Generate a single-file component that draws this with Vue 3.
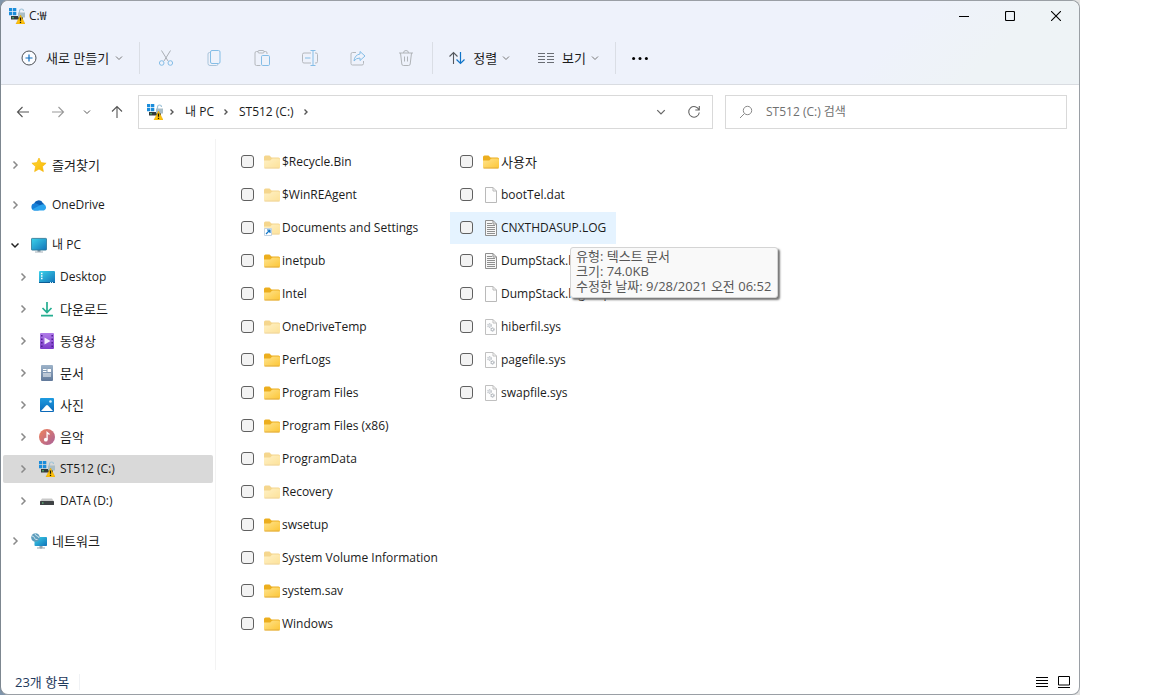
<script setup>
import { ref } from 'vue'

const editTools = [
  { icon: 'cut', label: '잘라내기' },
  { icon: 'copy', label: '복사' },
  { icon: 'paste', label: '붙여넣기' },
  { icon: 'rename', label: '이름 바꾸기' },
  { icon: 'share', label: '공유' },
  { icon: 'trash', label: '삭제' },
]

const groups = [
  [{ name: '즐겨찾기', icon: 'star', ko: true }],
  [{ name: 'OneDrive', icon: 'cloud' }],
  [
    { name: '내 PC', icon: 'monitor', open: true },
    { name: 'Desktop', icon: 'desktop', child: true },
    { name: '다운로드', icon: 'download', child: true, ko: true },
    { name: '동영상', icon: 'video', child: true, ko: true },
    { name: '문서', icon: 'document', child: true, ko: true },
    { name: '사진', icon: 'picture', child: true, ko: true },
    { name: '음악', icon: 'music', child: true, ko: true },
    { name: 'ST512 (C:)', icon: 'sysdrive', child: true, selected: true },
    { name: 'DATA (D:)', icon: 'drive', child: true },
  ],
  [{ name: '네트워크', icon: 'network', ko: true }],
]

const files = ref([
  { name: '$Recycle.Bin', icon: 'folder', dim: true },
  { name: '$WinREAgent', icon: 'folder', dim: true },
  { name: 'Documents and Settings', icon: 'folder', dim: true, link: true },
  { name: 'inetpub', icon: 'folder' },
  { name: 'Intel', icon: 'folder' },
  { name: 'OneDriveTemp', icon: 'folder', dim: true },
  { name: 'PerfLogs', icon: 'folder' },
  { name: 'Program Files', icon: 'folder' },
  { name: 'Program Files (x86)', icon: 'folder' },
  { name: 'ProgramData', icon: 'folder', dim: true },
  { name: 'Recovery', icon: 'folder', dim: true },
  { name: 'swsetup', icon: 'folder' },
  { name: 'System Volume Information', icon: 'folder', dim: true },
  { name: 'system.sav', icon: 'folder' },
  { name: 'Windows', icon: 'folder' },
  { name: '사용자', icon: 'folder', ko: true },
  { name: 'bootTel.dat', icon: 'file' },
  {
    name: 'CNXTHDASUP.LOG',
    icon: 'textfile',
    hover: true,
    tip: ['유형: 텍스트 문서', '크기: 74.0KB', '수정한 날짜: 9/28/2021 오전 06:52'],
  },
  { name: 'DumpStack.log', icon: 'textfile' },
  { name: 'DumpStack.log.tmp', icon: 'file' },
  { name: 'hiberfil.sys', icon: 'sysfile' },
  { name: 'pagefile.sys', icon: 'sysfile' },
  { name: 'swapfile.sys', icon: 'sysfile' },
])
</script>

<template>
  <svg class="defs" aria-hidden="true">
    <defs>
      <linearGradient id="g-folder" x1="0" y1="0" x2="1" y2="1">
        <stop offset="0" stop-color="#ffe48f" /><stop offset="1" stop-color="#fcc534" />
      </linearGradient>
      <linearGradient id="g-screen" x1="0" y1="0" x2="1" y2="1">
        <stop offset="0" stop-color="#3cd3ea" /><stop offset="1" stop-color="#1272b8" />
      </linearGradient>
      <linearGradient id="g-video" x1="0" y1="0" x2="0" y2="1">
        <stop offset="0" stop-color="#b07be8" /><stop offset="1" stop-color="#7b3bc9" />
      </linearGradient>
      <linearGradient id="g-doc" x1="0" y1="0" x2="0" y2="1">
        <stop offset="0" stop-color="#9db3c9" /><stop offset="1" stop-color="#61799a" />
      </linearGradient>
      <linearGradient id="g-pic" x1="0" y1="0" x2="0" y2="1">
        <stop offset="0" stop-color="#1d9be0" /><stop offset="1" stop-color="#0b68b8" />
      </linearGradient>
      <linearGradient id="g-music" x1="0" y1="0" x2="1" y2="1">
        <stop offset="0" stop-color="#f0835a" /><stop offset="1" stop-color="#a8619a" />
      </linearGradient>
      <linearGradient id="g-star" x1="0" y1="0" x2="1" y2="1">
        <stop offset="0" stop-color="#ffd83a" /><stop offset="1" stop-color="#f7b500" />
      </linearGradient>
    </defs>
    <symbol id="i-folder" viewBox="0 0 16 16">
      <path d="M0 3q0-1.500 1.500-1.500h4L7.500 3.500H14.500q1.500 0 1.500 1.500v3H0z" fill="#ecae1e" />
      <path d="M0 6.500h5.500q.8 0 1.300-.6l.9-.9q.5-.5 1.200-.5H14.500Q16 4.500 16 6v7q0 1.500-1.500 1.500h-13Q0 14.500 0 13z" fill="url(#g-folder)" />
      <path d="M.5 14h15" stroke="#d9a33c" stroke-width=".8" />
    </symbol>
    <symbol id="i-shortcut" viewBox="0 0 8 8">
      <path d="M.5.5h7v7h-7z" fill="#fff" stroke="#c3d3e2" />
      <path d="M2 6l3.500-3.500M3 2h3v3" fill="none" stroke="#1477c6" stroke-width="1.200" />
    </symbol>
    <symbol id="i-file" viewBox="0 0 16 16">
      <path d="M2.500.5h7.500L13.500 4v11.500h-11z" fill="#fdfdfd" stroke="#b9b9b9" />
      <path d="M10 .5V4h3.500" fill="none" stroke="#b9b9b9" />
    </symbol>
    <symbol id="i-textfile" viewBox="0 0 16 16">
      <path d="M2.500.5h7.500L13.500 4v11.500h-11z" fill="#f7f7f7" stroke="#8f8f8f" />
      <path d="M10 .5V4h3.500" fill="none" stroke="#8f8f8f" />
      <path d="M4 3.500h5M4 5.500h8M4 7.500h8M4 9.500h8M4 11.500h8M4 13.500h8" stroke="#8f8f8f" />
    </symbol>
    <symbol id="i-sysfile" viewBox="0 0 16 16">
      <path d="M2.500.5h7.500L13.500 4v11.500h-11z" fill="#fdfdfd" stroke="#c0c0c0" />
      <path d="M10 .5V4h3.500" fill="none" stroke="#c0c0c0" />
      <circle cx="6.500" cy="6.500" r="1.800" fill="#dfe2e6" stroke="#c6cacf" stroke-dasharray="1.200 .6" stroke-width="1.300" />
      <circle cx="9.500" cy="10.500" r="1.500" fill="#fff" stroke="#a2a8af" stroke-dasharray="1.100 .4" stroke-width="1.200" />
    </symbol>
    <symbol id="i-star" viewBox="0 0 16 16">
      <path d="M8 1l2.100 4.600 5 .6-3.700 3.400 1 5L8 12.100l-4.400 2.500 1-5L.9 6.200l5-.6z" fill="url(#g-star)" stroke="#f5b400" stroke-width=".6" stroke-linejoin="round" />
    </symbol>
    <symbol id="i-cloud" viewBox="0 0 16 16">
      <path d="M3 7.500A4.700 4.700 0 0 1 12 6.200q1 .3 1.500 1.300L8 11z" fill="#0c5fb4" />
      <path d="M3.600 6.200a3.700 3.700 0 0 0-.2 7.300h4L11 9.500 6.500 7q-1.400-.9-2.900-.8z" fill="#1680d8" />
      <path d="M12.500 7.200A3.300 3.300 0 0 1 13 13.500H3.400q-1.500-.1-2.400-1.100L9.600 8q1.300-.8 2.900-.8z" fill="#2ba4ee" />
    </symbol>
    <symbol id="i-monitor" viewBox="0 0 16 16">
      <path d="M6.500 12.500h3V15h-3z" fill="#8c9aa5" /><path d="M4 15h8" stroke="#a3afb8" />
      <rect x=".4" y="1.400" width="15.200" height="11.700" rx=".8" fill="url(#g-screen)" stroke="#2a708f" stroke-width=".8" />
    </symbol>
    <symbol id="i-desktop" viewBox="0 0 16 16">
      <rect y="2" width="16" height="12" rx="1" fill="url(#g-screen)" />
      <path d="M2 4.500h1.500M2 7h1.500M2 9.500h1.500" stroke="#fff" stroke-width="1.400" />
      <path d="M0 13.500h16" stroke="#0c5c94" /><path d="M11 13.500h1M13 13.500h1" stroke="#d5f3fc" />
    </symbol>
    <symbol id="i-download" viewBox="0 0 16 16">
      <path d="M8 1v10M3.500 7L8 11.500 12.500 7M2 14.700h12" fill="none" stroke="#25ae91" stroke-width="1.700" />
    </symbol>
    <symbol id="i-video" viewBox="0 0 16 16">
      <rect x="1" y="0" width="14" height="16" rx="1" fill="url(#g-video)" />
      <path d="M2.800 2v13M13.200 2v13" stroke="#4d1c8f" stroke-width="1.500" stroke-dasharray="1.500 2" />
      <path d="M5.500 4.500L11.500 8l-6 3.500z" fill="#f4edff" />
    </symbol>
    <symbol id="i-document" viewBox="0 0 16 16">
      <rect x="2" y="0" width="12" height="16" rx="1" fill="url(#g-doc)" />
      <path d="M4 4.500h3.500M4 6.500h3.500M4 9h8M4 11h8" stroke="#fff" /><path d="M8.500 4H12v3H8.500z" fill="#fff" />
    </symbol>
    <symbol id="i-picture" viewBox="0 0 16 16">
      <rect x="1" y="1" width="14" height="14" rx="1" fill="url(#g-pic)" />
      <path d="M2 14l5-5.500q1-1 2 0L14 14z" fill="#fff" /><circle cx="11.500" cy="4.500" r="1.300" fill="#d6efff" />
    </symbol>
    <symbol id="i-music" viewBox="0 0 16 16">
      <circle cx="8" cy="8" r="8" fill="url(#g-music)" />
      <circle cx="6.800" cy="10.700" r="1.900" fill="#fff" /><path d="M8.100 10.700V3.500l2.400 2" fill="none" stroke="#fff" stroke-width="1.300" />
    </symbol>
    <symbol id="i-drive" viewBox="0 0 16 16">
      <path d="M3 5.500h10l2 3H1z" fill="#c9c9c9" /><rect x="1" y="8" width="14" height="4" rx=".6" fill="#3e4244" />
      <rect x="3" y="9.500" width="1.500" height="1" fill="#6fe08e" />
    </symbol>
    <symbol id="i-sysdrive" viewBox="0 0 16 16">
      <path d="M2 8h12v3.500H2z" fill="#333b3d" /><path d="M3 9.800h2" stroke="#54c878" />
      <path d="M0 0h3.300v3.300H0zM4 0h3.300v3.300H4zM0 4h3.300v3.300H0zM4 4h3.300v3.300H4z" fill="#1b8ddb" />
      <path d="M10.500 5V3a2 2 0 0 1 4 0" fill="none" stroke="#9fc3d8" stroke-width="1.200" />
      <rect x="9" y="4.500" width="7" height="5" fill="#a9bdc6" />
      <path d="M11.500 7L16 16H7z" fill="#ffc20a" stroke="#e0a100" stroke-width=".5" stroke-linejoin="round" />
      <path d="M11.500 9.500v3.200M11.500 13.700v1.300" stroke="#1f1a06" stroke-width="1.300" />
    </symbol>
    <symbol id="i-network" viewBox="0 0 16 16">
      <path d="M9 12.500h2V15H9zM6 15h8" stroke="#97a4ad" fill="#97a4ad" />
      <rect x="3.500" y="4" width="12.500" height="9" rx=".8" fill="url(#g-screen)" />
      <circle cx="4.500" cy="4.500" r="4.300" fill="#5d9dbd" /><path d="M1 3q2 0 2.500 2t3 1.500M4 .5q0 2 2 2.500T8 5" fill="none" stroke="#cfe6ef" />
    </symbol>
    <symbol id="i-chevron" viewBox="0 0 8 8">
      <path d="M1 2.500l3 3 3-3" fill="none" stroke="currentColor" />
    </symbol>
    <symbol id="i-right" viewBox="0 0 8 8">
      <path d="M2.500 .5L6 4 2.500 7.500" fill="none" stroke="currentColor" stroke-width="1.500" />
    </symbol>
    <symbol id="i-crumb" viewBox="0 0 8 8">
      <path d="M2.500 1.500L5 4 2.500 6.500" fill="none" stroke="currentColor" stroke-width="1.400" />
    </symbol>
    <symbol id="i-plus" viewBox="0 0 16 16">
      <circle cx="8" cy="8" r="7" fill="#fafcff" stroke="#4c5055" /><path d="M8 4.500v7M4.500 8h7" stroke="#0f6cbd" stroke-width="1.200" />
    </symbol>
    <symbol id="i-cut" viewBox="0 0 16 16">
      <path d="M3.500.5L10 11M12.500.5L6 11" fill="none" stroke="#a9aeb4" />
      <circle cx="3.700" cy="13" r="2.300" fill="none" stroke="#84bde6" /><circle cx="12.300" cy="13" r="2.300" fill="none" stroke="#84bde6" />
    </symbol>
    <symbol id="i-copy" viewBox="0 0 16 16">
      <path d="M4.500 2.500h-1q-1.500 0-1.500 1.500v9.500Q2 15.500 4 15.500h6.500q1.500 0 1.500-1.500" fill="none" stroke="#a9c4da" />
      <rect x="4.500" y=".5" width="9.500" height="13" rx="1.500" fill="none" stroke="#84bde6" />
    </symbol>
    <symbol id="i-paste" viewBox="0 0 16 16">
      <path d="M6.500 15.500h-4Q1 15.500 1 14V3q0-1.500 1.500-1.500h9Q13 1.500 13 3v1" fill="none" stroke="#b4b8bd" />
      <rect x="4" y=".5" width="6" height="2.500" rx="1" fill="#eef2fa" stroke="#b4b8bd" />
      <rect x="7.500" y="5.500" width="8" height="10" rx="1.200" fill="#eef2fa" stroke="#84bde6" />
    </symbol>
    <symbol id="i-rename" viewBox="0 0 16 16">
      <path d="M9 3H2Q.5 3 .5 4.500v7Q.5 13 2 13h7M13 3h1q1.500 0 1.500 1.500v7Q15.500 13 14 13h-1" fill="none" stroke="#b4b8bd" />
      <path d="M3 8h5.500M11 .5v15M8.500.5h5M8.500 15.500h5" stroke="#84bde6" fill="none" />
    </symbol>
    <symbol id="i-share" viewBox="0 0 16 16">
      <path d="M6 2.500H2.500Q1 2.500 1 4v9.500Q1 15 2.500 15H12q1.500 0 1.500-1.500V11" fill="none" stroke="#b4b8bd" />
      <path d="M10 1.500L15 6l-5 4.500V8Q6 8 4 11q.5-6 6-7z" fill="none" stroke="#84bde6" stroke-linejoin="round" />
    </symbol>
    <symbol id="i-trash" viewBox="0 0 16 16">
      <path d="M1 3h14M5.500 3Q5.500.5 8 .5T10.500 3M2.500 3l1.300 11q.2 1.500 1.500 1.500h5.400q1.300 0 1.500-1.500L13.500 3M6.500 6.500v5M9.500 6.500v5" fill="none" stroke="#b0b4b8" />
    </symbol>
    <symbol id="i-sort" viewBox="0 0 16 16">
      <path d="M4.500 14V2.500M.5 6.500l4-4 4 4" fill="none" stroke="#55595e" stroke-width="1.100" /><path d="M11.500 2v11.500M7.500 9.500l4 4 4-4" fill="none" stroke="#0f74c8" stroke-width="1.200" />
    </symbol>
    <symbol id="i-view" viewBox="0 0 16 16">
      <path d="M0 3.500h7M0 6.500h7M0 9.500h7M0 12.500h7M9 3.500h7M9 6.500h7M9 9.500h7M9 12.500h7" stroke="#696d73" />
    </symbol>
    <symbol id="i-more" viewBox="0 0 16 16">
      <circle cx="1.600" cy="8.500" r="1.500" /><circle cx="8" cy="8.500" r="1.500" /><circle cx="14.400" cy="8.500" r="1.500" />
    </symbol>
    <symbol id="i-left-arrow" viewBox="0 0 16 16">
      <path d="M14 8H2.500M7.500 3L2.500 8l5 5" fill="none" stroke="currentColor" stroke-width="1.100" />
    </symbol>
    <symbol id="i-right-arrow" viewBox="0 0 16 16">
      <path d="M2 8h11.500M8.500 3l5 5-5 5" fill="none" stroke="currentColor" stroke-width="1.100" />
    </symbol>
    <symbol id="i-up-arrow" viewBox="0 0 16 16">
      <path d="M8 14V2.500M3 7.500l5-5 5 5" fill="none" stroke="currentColor" stroke-width="1.100" />
    </symbol>
    <symbol id="i-refresh" viewBox="0 0 16 16">
      <path d="M13 6A5.300 5.300 0 1 0 13.300 8.500M13.300 2v4h-4" fill="none" stroke="currentColor" stroke-width="1.100" />
    </symbol>
    <symbol id="i-search" viewBox="0 0 16 16">
      <circle cx="9.500" cy="6.500" r="4.200" fill="none" stroke="currentColor" /><path d="M6.500 9.500L2 14" stroke="currentColor" />
    </symbol>
    <symbol id="i-min" viewBox="0 0 10 10"><path d="M0 5.500h10" stroke="#000" /></symbol>
    <symbol id="i-max" viewBox="0 0 10 10"><rect x=".5" y=".5" width="9" height="9" rx="1" fill="none" stroke="#000" stroke-width="1.100" /></symbol>
    <symbol id="i-close" viewBox="0 0 10 10"><path d="M0 0l10 10M10 0L0 10" stroke="#000" stroke-width="1.100" /></symbol>
    <symbol id="i-list" viewBox="0 0 12 12"><path d="M0 1.500h12M0 4.500h12M0 7.500h12M0 10.500h12" stroke="#000" /></symbol>
    <symbol id="i-thumbs" viewBox="0 0 12 12"><path d="M.5.500h11v8.500H.5zM0 11.500h12" fill="none" stroke="#000" /></symbol>
  </svg>

  <div class="desk">
    <div class="backdrop">
      <main class="window">
        <header class="chrome">
          <div class="titlebar">
            <svg class="ic"><use href="#i-sysdrive" /></svg>
            <h1>C:₩</h1>
            <div class="caption">
              <button aria-label="최소화"><svg class="cap"><use href="#i-min" /></svg></button>
              <button aria-label="최대화"><svg class="cap"><use href="#i-max" /></svg></button>
              <button aria-label="닫기"><svg class="cap"><use href="#i-close" /></svg></button>
            </div>
          </div>
          <div class="commands">
            <button class="cmd new"><svg class="ic"><use href="#i-plus" /></svg><span>새로 만들기</span><svg class="chev"><use href="#i-chevron" /></svg></button>
            <div class="tools">
              <button v-for="t in editTools" :key="t.icon" class="tool" :aria-label="t.label" disabled>
                <svg class="ic"><use :href="'#i-' + t.icon" /></svg>
              </button>
            </div>
            <div class="views">
              <button class="cmd"><svg class="ic"><use href="#i-sort" /></svg><span>정렬</span><svg class="chev"><use href="#i-chevron" /></svg></button>
              <button class="cmd"><svg class="ic"><use href="#i-view" /></svg><span>보기</span><svg class="chev"><use href="#i-chevron" /></svg></button>
            </div>
            <button class="tool" aria-label="더 보기"><svg class="ic"><use href="#i-more" /></svg></button>
          </div>
        </header>

        <div class="navrow">
          <div class="navbtns">
            <button aria-label="뒤로"><svg class="ic"><use href="#i-left-arrow" /></svg></button>
            <button aria-label="앞으로" class="faded"><svg class="ic"><use href="#i-right-arrow" /></svg></button>
            <button aria-label="최근 위치" class="narrow"><svg class="chev"><use href="#i-chevron" /></svg></button>
            <button aria-label="위로"><svg class="ic"><use href="#i-up-arrow" /></svg></button>
          </div>
          <div class="address">
            <svg class="ic"><use href="#i-sysdrive" /></svg>
            <svg class="chev"><use href="#i-crumb" /></svg>
            <a href="#pc">내 PC</a>
            <svg class="chev"><use href="#i-crumb" /></svg>
            <a href="#c">ST512 (C:)</a>
            <svg class="chev"><use href="#i-crumb" /></svg>
            <span class="spacer"></span>
            <button aria-label="이전 위치"><svg class="wide"><use href="#i-chevron" /></svg></button>
            <button aria-label="새로 고침"><svg class="ic"><use href="#i-refresh" /></svg></button>
          </div>
          <label class="search">
            <svg class="ic"><use href="#i-search" /></svg>
            <input type="text" placeholder="ST512 (C:) 검색" aria-label="ST512 (C:) 검색" />
          </label>
        </div>

        <div class="body">
          <nav class="tree">
            <ul v-for="(g, i) in groups" :key="i">
              <li v-for="n in g" :key="n.name" :class="{ child: n.child, selected: n.selected }">
                <button :aria-label="n.name + ' 펼치기'" :class="{ open: n.open }"><svg class="arrow"><use href="#i-right" /></svg></button>
                <a href="#node" :class="{ ko: n.ko }"><svg class="ic"><use :href="'#i-' + n.icon" /></svg><span>{{ n.name }}</span></a>
              </li>
            </ul>
          </nav>

          <ul class="files">
            <li v-for="f in files" :key="f.name" :class="{ hover: f.hover }">
              <label :class="{ ko: f.ko }">
                <input v-model="f.checked" type="checkbox" />
                <span class="thumb">
                  <svg class="ic" :class="{ dim: f.dim }"><use :href="'#i-' + f.icon" /></svg>
                  <svg v-if="f.link" class="badge"><use href="#i-shortcut" /></svg>
                </span>
                <span>{{ f.name }}</span>
              </label>
              <div v-if="f.tip" class="tip" role="tooltip">
                <p v-for="line in f.tip" :key="line">{{ line }}</p>
              </div>
            </li>
          </ul>
        </div>

        <footer class="status">
          <span class="count">23개 항목</span>
          <div class="modes">
            <button aria-label="자세히"><svg class="mode"><use href="#i-list" /></svg></button>
            <button aria-label="큰 아이콘"><svg class="mode"><use href="#i-thumbs" /></svg></button>
          </div>
        </footer>
      </main>
    </div>
  </div>
</template>

<style>
body {
  background: #fff;
}
</style>

<style scoped>
.defs {
  position: absolute;
  width: 0;
  height: 0;
}
.desk {
  display: flex;
  min-height: 100vh;
  padding-right: 72px;
  box-sizing: border-box;
  font: 12px/16px "Open Sans", "Noto Sans CJK KR", sans-serif;
  color: #1b1b1b;
}
.backdrop {
  flex: 1;
  display: flex;
  background: linear-gradient(90deg, #7f95ab, #e3e3e3);
}
.window {
  flex: 1;
  display: flex;
  flex-direction: column;
  border: 1px solid #9a9fa5;
  border-left-color: #7d8790;
  border-radius: 8px;
  background: #fff;
}
h1,
p,
ul {
  margin: 0;
  padding: 0;
}
ul {
  list-style: none;
}
button {
  display: flex;
  align-items: center;
  justify-content: center;
  margin: 0;
  padding: 0;
  border: 0;
  background: none;
  font: inherit;
  color: inherit;
}
a {
  color: inherit;
  text-decoration: none;
}
svg {
  flex: none;
}
.ic {
  width: 16px;
  height: 16px;
}
.chev,
.arrow {
  width: 8px;
  height: 8px;
}
.wide,
.cap {
  width: 10px;
  height: 10px;
}
.ko {
  font-size: 13px;
}
.chrome {
  border-bottom: 1px solid #d9dce1;
  border-radius: 8px 8px 0 0;
  background: linear-gradient(135deg, #eef2fb 80%, #eef3f6 90%);
}
.titlebar {
  display: flex;
  align-items: center;
  height: 30px;
  padding-left: 8px;
  gap: 4px;
}
h1 {
  font-size: 12px;
  font-weight: 400;
}
.caption {
  display: flex;
  margin-left: auto;
}
.caption button {
  width: 46px;
  height: 28px;
}
.commands {
  display: flex;
  align-items: center;
  height: 53px;
}
.cmd {
  gap: 5px;
  font-size: 13px;
}
.cmd .ic {
  margin-right: 3px;
}
.cmd .chev {
  color: #777;
}
.new {
  padding: 0 16px 0 20px;
  gap: 6px;
}
.tools,
.views {
  display: flex;
  align-items: center;
  height: 32px;
  border-left: 1px solid #dadee5;
}
.views {
  gap: 28px;
  padding: 0 16px;
  border-right: 1px solid #dadee5;
}
.tools {
  padding: 0 2px;
}
.tool {
  width: 48px;
  height: 32px;
}
.navrow {
  display: flex;
  height: 34px;
  padding: 10px 12px 10px 0;
}
.navbtns {
  display: flex;
  flex: none;
  align-items: center;
  width: 137px;
  padding-left: 4px;
  box-sizing: border-box;
  color: #555;
}
.navbtns button {
  width: 35px;
  height: 32px;
}
.navbtns .narrow {
  width: 24px;
}
.navbtns .faded {
  color: #999;
}
.address,
.search {
  display: flex;
  align-items: center;
  box-sizing: border-box;
  min-width: 0;
  border: 1px solid #d9d9d9;
}
.address {
  flex: 575 1 575px;
  padding: 0 8px;
  gap: 5px;
}
.address a {
  padding: 0 3px 0 4px;
}
.address .chev {
  color: #555;
}
.address button {
  width: 20px;
  height: 24px;
  margin-left: 8px;
  color: #666;
}
.spacer {
  flex: 1;
}
.search {
  flex: 342 1 342px;
  margin-left: 12px;
  padding: 0 12px;
  gap: 12px;
  color: #8a8a8a;
}
.search input {
  flex: 1;
  min-width: 0;
  padding: 0;
  border: 0;
  outline: 0;
  background: none;
  font: inherit;
  color: #1b1b1b;
}
.search input::placeholder {
  color: #707070;
  opacity: 1;
}
.body {
  flex: 1;
  display: flex;
}
.tree {
  display: flex;
  flex-direction: column;
  gap: 12px;
  width: 215px;
  padding: 12px 2px 0;
  box-sizing: border-box;
  border-right: 1px solid #f3f3f3;
}
.tree ul {
  display: flex;
  flex-direction: column;
  gap: 4px;
}
.tree li {
  display: flex;
  align-items: center;
  height: 28px;
  padding-left: 4px;
  border-radius: 2px;
}
.tree .child {
  padding-left: 12px;
}
.tree .selected {
  background: #d9d9d9;
}
.tree button {
  width: 16px;
  height: 20px;
  color: #8a8a8a;
}
.tree .open {
  color: #222;
}
.tree .open .arrow {
  transform: rotate(90deg);
}
.tree a {
  display: flex;
  align-items: center;
  gap: 5px;
  padding-left: 8px;
}
.files {
  display: grid;
  grid-auto-flow: column;
  grid-template-rows: repeat(15, 32px);
  grid-auto-columns: 219px;
  align-content: start;
  gap: 1px 0;
  padding: 7px 0 0 15px;
}
.files li {
  position: relative;
  justify-self: start;
  white-space: nowrap;
}
.files .hover {
  background: #e5f3ff;
}
.files label {
  display: flex;
  align-items: center;
  height: 31px;
  padding: 0 10px;
}
.files input {
  appearance: none;
  width: 13px;
  height: 13px;
  margin: 0 10px 0 0;
  border: 1px solid #606060;
  border-radius: 3px;
  background: #f3f3f3;
}
.thumb {
  position: relative;
  width: 16px;
  height: 16px;
  margin-right: 2px;
}
.thumb .ic {
  display: block;
}
.dim {
  opacity: 0.5;
}
.badge {
  position: absolute;
  left: 0;
  bottom: 0;
  width: 8px;
  height: 8px;
}
.tip {
  position: absolute;
  z-index: 1;
  left: 120px;
  top: 35px;
  padding: 1px 6px 3px 5px;
  border: 1px solid #d4d4d4;
  border-radius: 3px;
  background: #f9f9f9;
  box-shadow: 2px 2px 2px #777;
  font-size: 13px;
  line-height: 15px;
  color: #575757;
}
.status {
  display: flex;
  align-items: center;
  height: 24px;
  padding: 0 9px 0 14px;
  color: #1e395b;
}
.count {
  padding-right: 10px;
  border-right: 1px solid #f0f2f5;
  font-size: 13px;
}
.modes {
  display: flex;
  gap: 10px;
  margin-left: auto;
}
.mode {
  width: 12px;
  height: 12px;
}
</style>
